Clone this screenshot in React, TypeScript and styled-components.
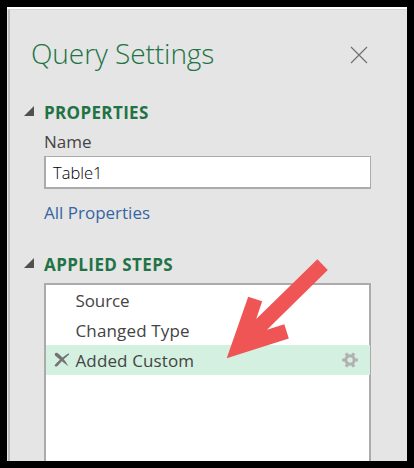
import React from "react";
import styled, { createGlobalStyle } from "styled-components";

const GlobalStyle = createGlobalStyle`
  *, *::before, *::after { box-sizing: border-box; }
  body {
    margin: 0;
    background: #000;
    font-family: "Open Sans", "Noto Sans", sans-serif;
    overflow: hidden;
  }
`;

const Frame = styled.div`
  position: relative;
  width: 414px;
  height: 468px;
  padding: 7px;
  background: #000;
`;

const Panel = styled.main`
  display: flex;
  flex-direction: column;
  width: 400px;
  height: 454px;
  padding-left: 1px;
  border-top: 2px solid #fff;
  background: #e5e5e5;
  overflow: hidden;
`;

const Body = styled.div`
  flex: 1;
  display: flex;
  flex-direction: column;
  min-height: 0;
  padding: 23px 36px 0 20px;
  border-top: 1px solid #d6d6d6;
  border-left: 2px solid #bdbdbd;
`;

const Header = styled.header`
  display: flex;
  flex: none;
  justify-content: space-between;
  height: 40px;
  margin-bottom: 29px;
`;

const Title = styled.h1`
  margin: 0 0 0 1px;
  font-size: 28px;
  font-weight: 300;
  line-height: 40px;
  letter-spacing: -0.06px;
  color: #217346;
  white-space: nowrap;
`;

const CloseButton = styled.button`
  width: 18px;
  height: 18px;
  margin: 13px 3px 0 0;
  padding: 0;
  border: 0;
  background: none;
`;

const Icon = styled.svg`
  display: block;
`;

const SectionHeader = styled.div`
  display: flex;
  flex: none;
  align-items: center;
  height: 20px;
  margin-left: -6px;
`;

const SectionTitle = styled.h2<{ $spacing: number }>`
  margin: 0 0 0 10px;
  padding-top: 2px;
  font-size: 17px;
  font-weight: 700;
  line-height: 20px;
  letter-spacing: ${(p) => p.$spacing}px;
  color: #217346;
  white-space: nowrap;
`;

const Content = styled.div`
  display: flex;
  flex: none;
  flex-direction: column;
  margin-left: 14px;
  width: 327px;
`;

const Label = styled.label`
  height: 24px;
  margin: 8px 0 2px;
  font-size: 17px;
  line-height: 24px;
  color: #444;
`;

const Field = styled.div`
  height: 33px;
  padding-left: 7px;
  border: solid #ababab;
  border-width: 1px 1px 2px 2px;
  background: #fff;
  font-size: 16.5px;
  font-weight: 300;
  line-height: 32px;
  color: #000;
`;

const Link = styled.a`
  height: 24px;
  margin: 12px 0 29px;
  font-size: 17px;
  line-height: 24px;
  color: #3465a4;
`;

const Steps = styled.ul`
  flex: none;
  height: 190px;
  margin: 9px 0 0 14px;
  padding: 0;
  width: 327px;
  border: 2px solid #ababab;
  background: #fff;
  list-style: none;
`;

const Step = styled.li<{ $selected?: boolean }>`
  display: flex;
  align-items: center;
  width: 324px;
  height: 30px;
  padding: 0 12px 0 8px;
  background: ${(p) => (p.$selected ? "#d3f0e0" : "transparent")};
`;

const StepMark = styled.span`
  width: 21.5px;
  flex: none;
`;

const StepName = styled.span<{ $spacing: number }>`
  flex: 1;
  padding-top: 2px;
  font-size: 17px;
  line-height: 28px;
  letter-spacing: ${(p) => p.$spacing}px;
  color: #444;
  white-space: nowrap;
`;

const ArrowOverlay = styled.svg`
  position: absolute;
  left: 220px;
  top: 250px;
  pointer-events: none;
`;

function Caret() {
  return (
    <Icon width="10" height="20" viewBox="0 0 10 20">
      <path d="M0 14L10 4V14Z" fill="#505050" />
    </Icon>
  );
}

function DeleteIcon() {
  return (
    <Icon width="16" height="16" viewBox="0 0 16 16" fill="#737373">
      <path d="M0.8 1.6Q1.8 0.4 3.4 1.1Q8.8 4.6 14.4 14.2Q8.2 10 1 3.6Z" />
      <path d="M0.6 13.2Q6 6.6 14.6 1.2L15.2 2.4Q8.6 7.4 3.2 14.3Q1 15.2 0.6 13.2Z" />
    </Icon>
  );
}

function GearIcon() {
  const teeth = [0, 60, 120, 180, 240, 300];
  return (
    <Icon width="16" height="16" viewBox="0 0 16 16">
      <g stroke="#b1b1b1" fill="none">
        <circle cx="8" cy="8" r="4.2" strokeWidth="3" />
        {teeth.map((a) => (
          <path key={a} d="M12.6 8H15.9" strokeWidth="3" transform={`rotate(${a} 8 8)`} />
        ))}
      </g>
    </Icon>
  );
}

const steps = [
  { name: "Source", spacing: -0.1 },
  { name: "Changed Type", spacing: 0.15 },
  { name: "Added Custom", spacing: 0.12, selected: true },
];

export default function App() {
  return (
    <>
      <GlobalStyle />
      <Frame>
        <Panel>
          <Body>
            <Header>
              <Title>Query Settings</Title>
              <CloseButton aria-label="Close">
                <Icon width="18" height="18" viewBox="0 0 18 18">
                  <path d="M1 1L17 17M17 1L1 17" stroke="#707070" strokeWidth="1.2" />
                </Icon>
              </CloseButton>
            </Header>
            <SectionHeader>
              <Caret />
              <SectionTitle $spacing={0.35}>PROPERTIES</SectionTitle>
            </SectionHeader>
            <Content>
              <Label>Name</Label>
              <Field>Table1</Field>
              <Link>All Properties</Link>
            </Content>
            <SectionHeader>
              <Caret />
              <SectionTitle $spacing={0.42}>APPLIED STEPS</SectionTitle>
            </SectionHeader>
            <Steps>
              {steps.map((s) => (
                <Step key={s.name} $selected={s.selected}>
                  <StepMark>{s.selected && <DeleteIcon />}</StepMark>
                  <StepName $spacing={s.spacing}>{s.name}</StepName>
                  {s.selected && <GearIcon />}
                </Step>
              ))}
            </Steps>
          </Body>
        </Panel>
        <ArrowOverlay width="115" height="115" viewBox="220 250 115 115">
          <path
            d="M226.7 358.3L248.2 296.7L262.2 301.2L256.2 319L317.4 259.2L327.8 270L267 329.8L284.3 324.2L288.8 338.4Z"
            fill="#f05555"
          />
        </ArrowOverlay>
      </Frame>
    </>
  );
}
